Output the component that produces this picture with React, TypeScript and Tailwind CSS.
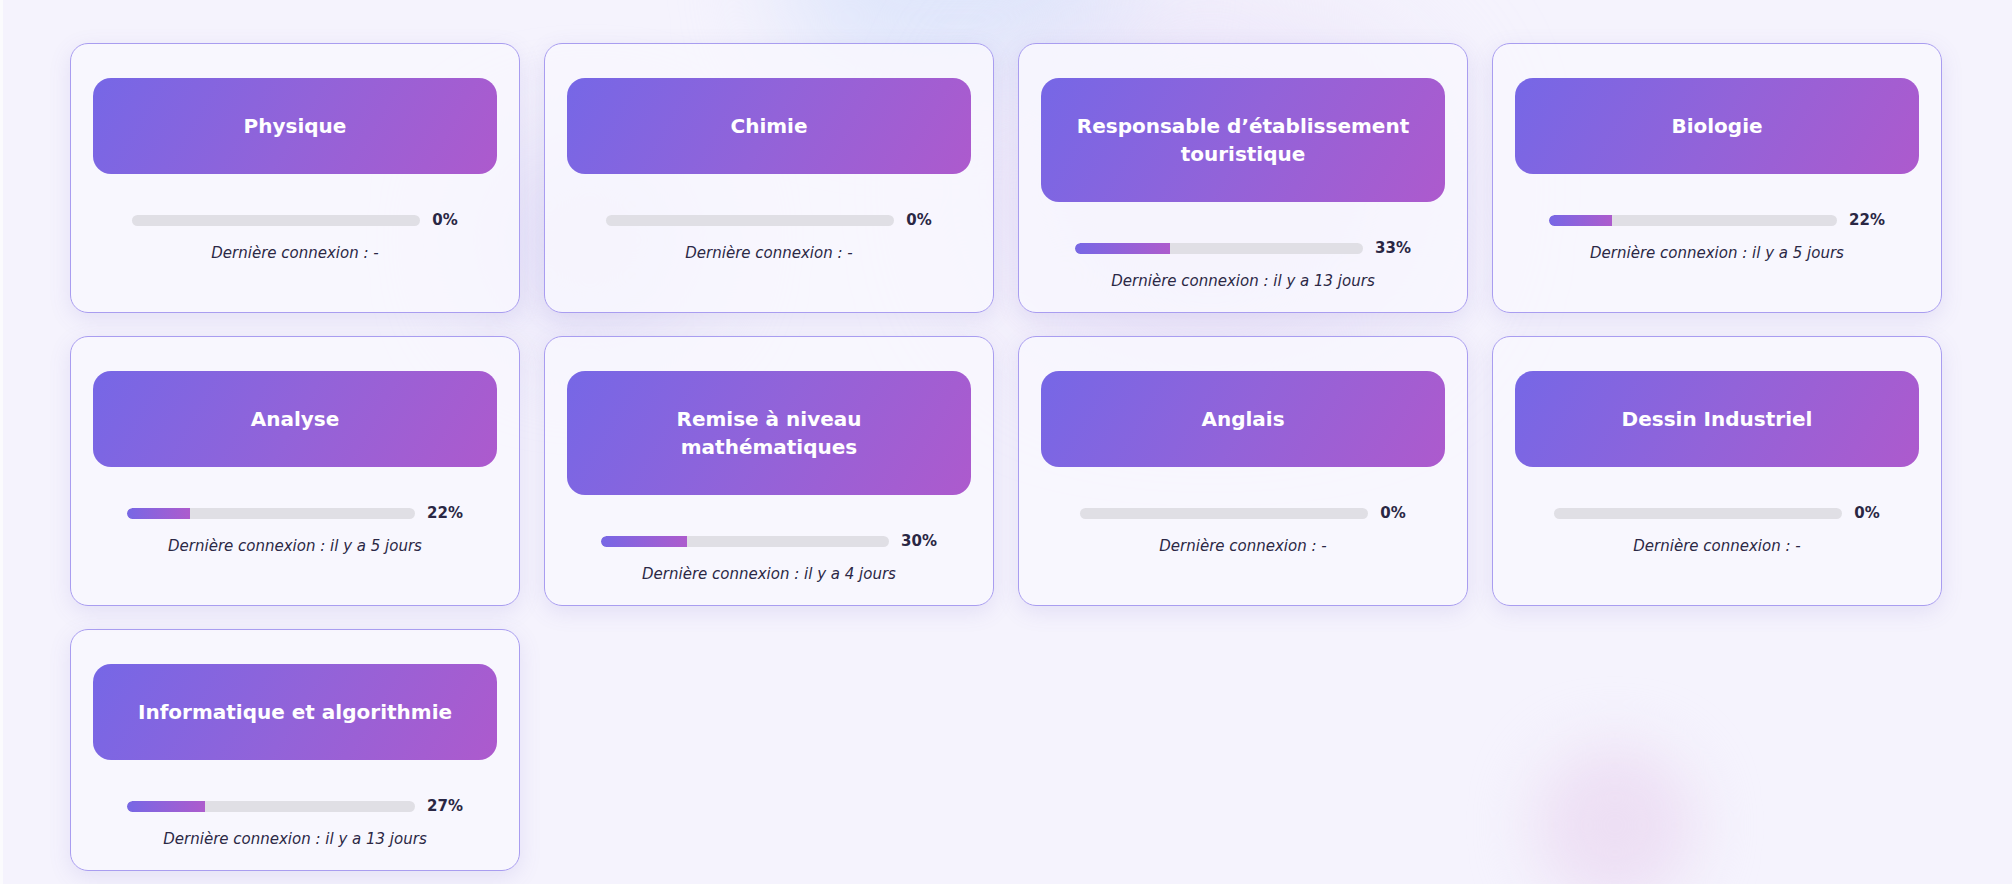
import React from "react";

type Course = { title: string; pct: number; last: string };

const courses: Course[] = [
  { title: "Physique", pct: 0, last: "-" },
  { title: "Chimie", pct: 0, last: "-" },
  { title: "Responsable d’établissement touristique", pct: 33, last: "il y a 13 jours" },
  { title: "Biologie", pct: 22, last: "il y a 5 jours" },
  { title: "Analyse", pct: 22, last: "il y a 5 jours" },
  { title: "Remise à niveau mathématiques", pct: 30, last: "il y a 4 jours" },
  { title: "Anglais", pct: 0, last: "-" },
  { title: "Dessin Industriel", pct: 0, last: "-" },
  { title: "Informatique et algorithmie", pct: 27, last: "il y a 13 jours" },
];

function CourseCard({ c }: { c: Course }) {
  return (
    <div className="flex flex-col rounded-[18px] border border-[#a99df0] bg-[#f8f7fe]/85 px-[22px] pt-[34px] pb-[20px] shadow-[0_6px_22px_rgba(110,90,190,0.13)]">
      <div className="rounded-[18px] bg-[linear-gradient(120deg,#7667e6_0%,#9263d9_50%,#ad5acd_100%)] px-[28px] py-[34px] text-center text-[20px] font-bold leading-[28px] text-white">
        {c.title}
      </div>
      <div className="mt-[34px] flex h-6 items-center justify-center gap-3">
        <div className="h-[11px] w-72 overflow-hidden rounded-full bg-[#e0dfe5]">
          <div
            className="h-full rounded-l-full bg-[linear-gradient(90deg,#7767e5,#ad5ccd)]"
            style={{ width: `${c.pct}%` }}
          />
        </div>
        <span className="text-[15px] font-bold text-[#2a2744]">{c.pct}%</span>
      </div>
      <div className="mt-[10px] text-center text-[15px] italic leading-[22px] text-[#2b2845]">
        Dernière connexion : {c.last}
      </div>
    </div>
  );
}

export default function App() {
  return (
    <div
      className="relative min-h-screen w-full overflow-hidden bg-[#f5f3fd]"
      style={{ fontFamily: '"DejaVu Sans", "Open Sans", sans-serif' }}
    >
      <div className="pointer-events-none absolute inset-0">
        <div className="absolute left-[780px] top-[-120px] h-[200px] w-[360px] rounded-full bg-[#dfe6fb] blur-[50px]" />
        <div className="absolute left-[1000px] top-[40px] h-[300px] w-[420px] rounded-full bg-[#e8e0f8] blur-[70px]" />
        <div className="absolute left-[480px] top-[140px] h-[200px] w-[220px] rounded-full bg-[#e6e2f8] blur-[50px]" />
        <div className="absolute left-[1535px] top-[745px] h-[160px] w-[160px] rounded-full bg-[#eddff4] blur-[30px]" />
        <div className="absolute left-0 top-0 h-full w-[3px] bg-[#fbfbfd]" />
      </div>
      <div className="relative grid grid-cols-4 items-stretch gap-x-6 gap-y-[23px] px-[70px] pt-[43px] pb-[14px]">
        {courses.map((c) => (
          <CourseCard key={c.title} c={c} />
        ))}
      </div>
    </div>
  );
}
